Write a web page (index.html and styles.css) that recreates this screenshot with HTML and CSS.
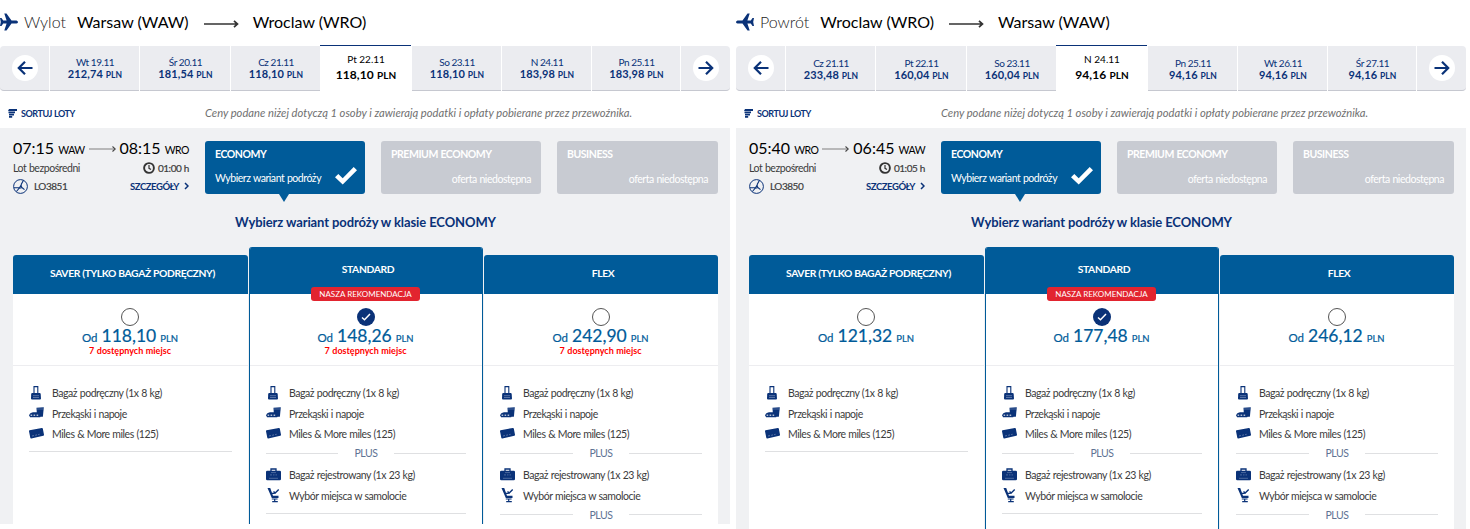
FILE: index.html
```
<!DOCTYPE html>
<html lang="pl">
<head>
    <meta charset="UTF-8">
    <meta name="viewport" content="width=device-width, initial-scale=1.0">
    <title>Wybierz lot</title>
    <link rel="stylesheet" href="styles.css">
</head>
<body>
    <!-- ikony -->
    <svg class="sprite">
        <symbol id="plane" viewBox="0 0 18 18">
            <path d="M18 9c0-1-1.200-1.600-2.500-1.600h-4L6.500.5H4.300l2.300 6.900H3.200L1.500 5H0l.8 4L0 13h1.500l1.700-2.400h3.400l-2.300 6.900h2.200l5-6.900h4C16.800 10.600 18 10 18 9z"/>
        </symbol>
        <symbol id="left" viewBox="0 0 16 14">
            <path d="M15.500 7H2M8 .8L1.800 7 8 13.200" fill="none" stroke="currentColor" stroke-width="2.200"/>
        </symbol>
        <symbol id="right" viewBox="0 0 16 14">
            <path d="M.5 7H14M8 .8L14.200 7 8 13.200" fill="none" stroke="currentColor" stroke-width="2.200"/>
        </symbol>
        <symbol id="long" viewBox="0 0 35 8">
            <path d="M0 4h33M30 .8L33.500 4 30 7.200" fill="none" stroke="currentColor" stroke-width="1.700"/>
        </symbol>
        <symbol id="mid" viewBox="0 0 27 6">
            <path d="M0 3h26" fill="none" stroke="#999" stroke-width="1.300"/>
            <path d="M23.500 .5L26.300 3l-2.800 2.500" fill="none" stroke="#444" stroke-width="1.100"/>
        </symbol>
        <symbol id="sort" viewBox="0 0 9 9">
            <path d="M1 0h8v2H0zM.5 2.400h6.500v1.900H.5zM1 4.700h5v1.800H1zM1 6.900h3.200v1.900H1z"/>
        </symbol>
        <symbol id="clock" viewBox="0 0 12 12">
            <circle cx="6" cy="6" r="4.900" fill="none" stroke="#333" stroke-width="1.900"/>
            <path d="M6 3v3.300l2 1.200" fill="none" stroke="#333" stroke-width="1.200"/>
        </symbol>
        <symbol id="lot" viewBox="0 0 15 15">
            <circle cx="7.500" cy="7.500" r="6.900" fill="none" stroke="currentColor"/>
            <path d="M10.500 1.200L8.300 5.300q-.6 2 .6 3.200l2.600 2.200M8.600 8.700L6.200 9.200l-2.800 3.300M8.300 5.700L6.500 8.700H1" fill="none" stroke="currentColor" stroke-width="1.100"/>
        </symbol>
        <symbol id="check" viewBox="0 0 22 18">
            <path d="M0 10.200L3.300 7l4.400 4.200L18.700 0 22 3.200 7.700 17.600z"/>
        </symbol>
        <symbol id="tick" viewBox="0 0 10 8">
            <path d="M1 4.500l2.500 2.300L9 1" fill="none" stroke="currentColor" stroke-width="1.500"/>
        </symbol>
        <symbol id="hand" viewBox="0 0 15 15">
            <path d="M5 8V.6h3.800V8" fill="none" stroke="currentColor" stroke-width="1.100"/>
            <path d="M3.200 7h7.400q1 0 1.100 1l.3 4.500q0 1-1 1h-8q-1 0-1-1L2.200 8q.1-1 1-1z"/>
            <path d="M4 9.700h6M4 11.500h6" stroke="#8da0c4" stroke-width=".6"/>
        </symbol>
        <symbol id="snack" viewBox="0 0 15 15">
            <path d="M7.500 1.800l7.300-.6-.9 9.600H8z"/>
            <path d="M7.500 3h7" stroke="#8da0c4" stroke-width=".5"/>
            <path d="M.2 9.200Q.6 6.700 4 6.200h4q3 .4 3.800 3l-.6 2H1z"/>
            <path d="M1.600 9.200h1.600m1.400 0h1.600m1.400 0h1.600" stroke="#fff" stroke-width="1"/>
        </symbol>
        <symbol id="card" viewBox="0 0 15 15">
            <path d="M0 4.200q-.2-.8.6-1L12.800 .9q.8-.1 1 .6L15 7.700q.1.800-.7 1L2.300 11.500q-.8.200-1-.7z"/>
            <path d="M3 9l2-.4m1.200-.3l1.800-.4m1.200-.3l1.400-.3" stroke="#8da0c4" stroke-width=".6"/>
        </symbol>
        <symbol id="case" viewBox="0 0 15 15">
            <path d="M5 3.500V1h5v2.500" fill="none" stroke="currentColor" stroke-width="1.300"/>
            <path d="M1.300 2.700h12.400q1.300 0 1.300 1.300v7q0 1.300-1.300 1.300H1.300Q0 12.300 0 11V4q0-1.300 1.300-1.300z"/>
            <path d="M3 10.300h9M4 6.900h2m1 0h1.500m1 0H11M5 4.600h5" stroke="#8da0c4" stroke-width=".5"/>
        </symbol>
        <symbol id="seat" viewBox="0 0 15 15">
            <path d="M1.500 0l2.700-.1L7 7.700h5.500V10H5.800z"/>
            <path d="M5.800 5.300h3M5.800 11h5.800M8.700 10.500v3M6.200 13.600h5.600" fill="none" stroke="currentColor" stroke-width="1.200"/>
            <path d="M7.500 3.400L9.200 5l3.500-3.400" fill="none" stroke="currentColor" stroke-width="1.400"/>
        </symbol>
    </svg>

    <div class="page">
        <!-- Wylot -->
        <section class="flight out">
            <h1 class="route">
                <svg class="plane"><use href="#plane"/></svg>
                <span class="dir">Wylot</span>
                <span class="city">Warsaw (WAW)</span>
                <svg class="long"><use href="#long"/></svg>
                <span class="city">Wroclaw (WRO)</span>
            </h1>
            <div class="days">
                <button class="arrow prev"><i><svg><use href="#left"/></svg></i></button>
                <div class="day"><span>Wt 19.11</span><b>212,74 <small>PLN</small></b></div>
                <div class="day"><span>Śr 20.11</span><b>181,54 <small>PLN</small></b></div>
                <div class="day"><span>Cz 21.11</span><b>118,10 <small>PLN</small></b></div>
                <div class="day active"><span>Pt 22.11</span><b>118,10 <small>PLN</small></b></div>
                <div class="day"><span>So 23.11</span><b>118,10 <small>PLN</small></b></div>
                <div class="day"><span>N 24.11</span><b>183,98 <small>PLN</small></b></div>
                <div class="day"><span>Pn 25.11</span><b>183,98 <small>PLN</small></b></div>
                <button class="arrow next"><i><svg><use href="#right"/></svg></i></button>
            </div>
            <div class="sortbar">
                <svg class="sort"><use href="#sort"/></svg>
                <span class="sort-text">SORTUJ LOTY</span>
                <em>Ceny podane niżej dotyczą 1 osoby i zawierają podatki i opłaty pobierane przez przewoźnika.</em>
            </div>
            <div class="result">
                <div class="top">
                    <div class="info">
                        <div class="hours"><span>07:15 <small>WAW</small></span><svg><use href="#mid"/></svg><span>08:15 <small>WRO</small></span></div>
                        <div class="line"><span>Lot bezpośredni</span><span class="time"><svg><use href="#clock"/></svg>01:00 h</span></div>
                        <div class="line"><span class="num"><svg><use href="#lot"/></svg>LO3851</span><a class="more">SZCZEGÓŁY <svg viewBox="0 0 5 8"><path d="M1 1l3 3-3 3"/></svg></a></div>
                    </div>
                    <div class="cabin selected"><b>ECONOMY</b><span>Wybierz wariant podróży</span><svg><use href="#check"/></svg></div>
                    <div class="cabin"><b>PREMIUM ECONOMY</b><span>oferta niedostępna</span></div>
                    <div class="cabin"><b>BUSINESS</b><span>oferta niedostępna</span></div>
                </div>
                <h2>Wybierz wariant podróży w klasie ECONOMY</h2>
                <div class="fares">
                    <div class="fare">
                        <h3>SAVER (TYLKO BAGAŻ PODRĘCZNY)</h3>
                        <div class="price"><i class="radio"></i><p>Od <b>118,10</b> <small>PLN</small></p><em>7 dostępnych miejsc</em></div>
                        <ul>
                            <li><svg><use href="#hand"/></svg>Bagaż podręczny (1x 8 kg)</li>
                            <li><svg><use href="#snack"/></svg>Przekąski i napoje</li>
                            <li><svg><use href="#card"/></svg>Miles &amp; More miles (125)</li>
                            <li class="rule"></li>
                        </ul>
                    </div>
                    <div class="fare best">
                        <h3>STANDARD</h3>
                        <span class="tag">NASZA REKOMENDACJA</span>
                        <div class="price"><i class="radio on"><svg><use href="#tick"/></svg></i><p>Od <b>148,26</b> <small>PLN</small></p><em>7 dostępnych miejsc</em></div>
                        <ul>
                            <li><svg><use href="#hand"/></svg>Bagaż podręczny (1x 8 kg)</li>
                            <li><svg><use href="#snack"/></svg>Przekąski i napoje</li>
                            <li><svg><use href="#card"/></svg>Miles &amp; More miles (125)</li>
                            <li class="plus">PLUS</li>
                            <li><svg><use href="#case"/></svg>Bagaż rejestrowany (1x 23 kg)</li>
                            <li><svg><use href="#seat"/></svg>Wybór miejsca w samolocie</li>
                            <li class="rule"></li>
                        </ul>
                    </div>
                    <div class="fare">
                        <h3>FLEX</h3>
                        <div class="price"><i class="radio"></i><p>Od <b>242,90</b> <small>PLN</small></p><em>7 dostępnych miejsc</em></div>
                        <ul>
                            <li><svg><use href="#hand"/></svg>Bagaż podręczny (1x 8 kg)</li>
                            <li><svg><use href="#snack"/></svg>Przekąski i napoje</li>
                            <li><svg><use href="#card"/></svg>Miles &amp; More miles (125)</li>
                            <li class="plus">PLUS</li>
                            <li><svg><use href="#case"/></svg>Bagaż rejestrowany (1x 23 kg)</li>
                            <li><svg><use href="#seat"/></svg>Wybór miejsca w samolocie</li>
                            <li class="plus">PLUS</li>
                        </ul>
                    </div>
                </div>
            </div>
        </section>

        <!-- Powrót -->
        <section class="flight back">
            <h1 class="route">
                <svg class="plane"><use href="#plane"/></svg>
                <span class="dir">Powrót</span>
                <span class="city">Wroclaw (WRO)</span>
                <svg class="long"><use href="#long"/></svg>
                <span class="city">Warsaw (WAW)</span>
            </h1>
            <div class="days">
                <button class="arrow prev"><i><svg><use href="#left"/></svg></i></button>
                <div class="day"><span>Cz 21.11</span><b>233,48 <small>PLN</small></b></div>
                <div class="day"><span>Pt 22.11</span><b>160,04 <small>PLN</small></b></div>
                <div class="day"><span>So 23.11</span><b>160,04 <small>PLN</small></b></div>
                <div class="day active"><span>N 24.11</span><b>94,16 <small>PLN</small></b></div>
                <div class="day"><span>Pn 25.11</span><b>94,16 <small>PLN</small></b></div>
                <div class="day"><span>Wt 26.11</span><b>94,16 <small>PLN</small></b></div>
                <div class="day"><span>Śr 27.11</span><b>94,16 <small>PLN</small></b></div>
                <button class="arrow next"><i><svg><use href="#right"/></svg></i></button>
            </div>
            <div class="sortbar">
                <svg class="sort"><use href="#sort"/></svg>
                <span class="sort-text">SORTUJ LOTY</span>
                <em>Ceny podane niżej dotyczą 1 osoby i zawierają podatki i opłaty pobierane przez przewoźnika.</em>
            </div>
            <div class="result">
                <div class="top">
                    <div class="info">
                        <div class="hours"><span>05:40 <small>WRO</small></span><svg><use href="#mid"/></svg><span>06:45 <small>WAW</small></span></div>
                        <div class="line"><span>Lot bezpośredni</span><span class="time"><svg><use href="#clock"/></svg>01:05 h</span></div>
                        <div class="line"><span class="num"><svg><use href="#lot"/></svg>LO3850</span><a class="more">SZCZEGÓŁY <svg viewBox="0 0 5 8"><path d="M1 1l3 3-3 3"/></svg></a></div>
                    </div>
                    <div class="cabin selected"><b>ECONOMY</b><span>Wybierz wariant podróży</span><svg><use href="#check"/></svg></div>
                    <div class="cabin"><b>PREMIUM ECONOMY</b><span>oferta niedostępna</span></div>
                    <div class="cabin"><b>BUSINESS</b><span>oferta niedostępna</span></div>
                </div>
                <h2>Wybierz wariant podróży w klasie ECONOMY</h2>
                <div class="fares">
                    <div class="fare">
                        <h3>SAVER (TYLKO BAGAŻ PODRĘCZNY)</h3>
                        <div class="price"><i class="radio"></i><p>Od <b>121,32</b> <small>PLN</small></p></div>
                        <ul>
                            <li><svg><use href="#hand"/></svg>Bagaż podręczny (1x 8 kg)</li>
                            <li><svg><use href="#snack"/></svg>Przekąski i napoje</li>
                            <li><svg><use href="#card"/></svg>Miles &amp; More miles (125)</li>
                            <li class="rule"></li>
                        </ul>
                    </div>
                    <div class="fare best">
                        <h3>STANDARD</h3>
                        <span class="tag">NASZA REKOMENDACJA</span>
                        <div class="price"><i class="radio on"><svg><use href="#tick"/></svg></i><p>Od <b>177,48</b> <small>PLN</small></p></div>
                        <ul>
                            <li><svg><use href="#hand"/></svg>Bagaż podręczny (1x 8 kg)</li>
                            <li><svg><use href="#snack"/></svg>Przekąski i napoje</li>
                            <li><svg><use href="#card"/></svg>Miles &amp; More miles (125)</li>
                            <li class="plus">PLUS</li>
                            <li><svg><use href="#case"/></svg>Bagaż rejestrowany (1x 23 kg)</li>
                            <li><svg><use href="#seat"/></svg>Wybór miejsca w samolocie</li>
                            <li class="rule"></li>
                        </ul>
                    </div>
                    <div class="fare">
                        <h3>FLEX</h3>
                        <div class="price"><i class="radio"></i><p>Od <b>246,12</b> <small>PLN</small></p></div>
                        <ul>
                            <li><svg><use href="#hand"/></svg>Bagaż podręczny (1x 8 kg)</li>
                            <li><svg><use href="#snack"/></svg>Przekąski i napoje</li>
                            <li><svg><use href="#card"/></svg>Miles &amp; More miles (125)</li>
                            <li class="plus">PLUS</li>
                            <li><svg><use href="#case"/></svg>Bagaż rejestrowany (1x 23 kg)</li>
                            <li><svg><use href="#seat"/></svg>Wybór miejsca w samolocie</li>
                            <li class="plus">PLUS</li>
                        </ul>
                    </div>
                </div>
            </div>
        </section>
    </div>
</body>
</html>
```
FILE: styles.css
```
*{
    margin: 0;
    padding: 0;
    box-sizing: border-box;
}
body{
    font-family: Lato, "Liberation Sans", sans-serif;
    font-size: 10.500px;
    letter-spacing: -.45px;
    word-spacing: .4px;
    color: #3c3c3c;
    background: #fff;
    overflow: hidden;
}
i{
    font-style: normal;
}
svg{
    display: block;
    fill: currentColor;
    flex: none;
}
.sprite{
    display: none;
}
.page{
    display: flex;
    gap: 6px;
    height: 529px;
    overflow: hidden;
}
.flight{
    width: 730px;
    height: 529px;
    overflow: hidden;
}
.out{
    height: 524px;
}

/* trasa */
.route{
    display: flex;
    align-items: center;
    height: 45px;
    padding-bottom: 2px;
    font-size: 16px;
    font-weight: 400;
    letter-spacing: 0;
    word-spacing: 0;
    color: #000;
    white-space: nowrap;
}
.plane{
    width: 18px;
    height: 18px;
    margin-top: 1px;
    color: #0a3278;
}
.back .plane{
    transform: scaleX(-1);
}
.dir{
    margin-left: 6px;
    margin-right: 11px;
    font-weight: 300;
    color: #222;
}
.long{
    width: 35px;
    height: 8px;
    margin: 4px 14px 0 15px;
    color: #333;
}

/* pasek dni */
.days{
    display: grid;
    grid-template-columns: 49px 89px 90px 89px 90px 89px 89px 88px 49px;
    column-gap: 1px;
    height: 46px;
}
.day,.arrow{
    margin-top: 1px;
    background: #ebecf0;
    border: none;
    border-bottom: 1px solid #c6c8d0;
    color: #0a3278;
}
.day{
    display: flex;
    flex-direction: column;
    align-items: center;
    padding: 10px 0 0 1px;
    font-size: 10px;
    line-height: 12px;
    word-spacing: 0;
}
.day b{
    font-size: 11px;
    letter-spacing: .1px;
}
.day small{
    font-size: 8.500px;
}
.back .day:not(.active){
    padding-top: 11px;
}
.day.active{
    margin: 0 0 0 -1px;
    padding-top: 6px;
    background: #fff;
    border-top: 1px solid #0a3278;
    border-bottom: none;
    color: #000;
    line-height: 15px;
    letter-spacing: 0;
}
.day.active b{
    font-size: 12px;
}
.day.active small{
    font-size: 10px;
}
.arrow{
    display: flex;
    align-items: center;
    justify-content: center;
    padding-left: 1px;
}
.prev{
    border-radius: 4px 0 0 4px;
}
.next{
    border-radius: 0 4px 4px 0;
}
.arrow i{
    display: flex;
    align-items: center;
    justify-content: center;
    width: 26px;
    height: 26px;
    border-radius: 50%;
    background: #fff;
}
.arrow svg{
    width: 16px;
    height: 14px;
}

/* sortowanie */
.sortbar{
    display: flex;
    align-items: center;
    height: 37px;
    padding: 7px 0 0 8px;
    color: #0a3278;
}
.sort{
    width: 9px;
    height: 9px;
    margin-right: 4px;
}
.sort-text{
    width: 184px;
    font-size: 9px;
    font-weight: 700;
}
.sortbar em{
    padding-bottom: 1px;
    font-size: 11.200px;
    letter-spacing: 0;
    word-spacing: 0;
    color: #707070;
    white-space: nowrap;
}

/* lot */
.result{
    height: 401px;
    padding: 13px 12px 0 13px;
    background: #f0f1f3;
}
.top{
    display: grid;
    grid-template-columns: 176px 160px 160px 161px;
    column-gap: 16px;
    height: 53px;
}
.hours{
    display: flex;
    justify-content: space-between;
    align-items: center;
    height: 16px;
    margin-bottom: 2px;
    font-size: 16px;
    letter-spacing: 0;
    word-spacing: 0;
    line-height: 16px;
    color: #000;
}
.hours small{
    font-size: 10.500px;
    letter-spacing: -.5px;
}
.hours svg{
    width: 27px;
    height: 6px;
}
.line{
    display: flex;
    justify-content: space-between;
    align-items: center;
    height: 18px;
}
.line span,.line a{
    display: flex;
    align-items: center;
}
.time svg{
    width: 12px;
    height: 12px;
    margin-right: 3px;
}
.num svg{
    width: 15px;
    height: 15px;
    margin-right: 6px;
    color: #0a3278;
}
.line .time,.line .num{
    font-size: 10px;
    letter-spacing: -.45px;
    -webkit-text-stroke: .2px #3c3c3c;
}
.more{
    font-size: 9.500px;
    font-weight: 700;
    color: #0a3278;
}
.more svg{
    width: 5px;
    height: 8px;
    margin-left: 5px;
    fill: none;
    stroke: #0a3278;
    stroke-width: 1.500;
}
.cabin{
    position: relative;
    display: flex;
    flex-direction: column;
    height: 53px;
    padding: 7px 10px;
    border-radius: 3px;
    background: #c8cbd2;
    color: #fff;
    line-height: 12px;
}
.cabin span{
    margin-top: 13px;
    text-align: right;
}
.cabin.selected{
    background: #005b99;
}
.selected span{
    margin-top: 12px;
    text-align: left;
}
.selected svg{
    position: absolute;
    right: 8px;
    bottom: 9px;
    width: 22px;
    height: 18px;
}
.selected::after{
    content: "";
    position: absolute;
    left: 74px;
    top: 53px;
    border: 5px solid transparent;
    border-top: 8px solid #005b99;
    border-bottom: none;
}
h2{
    height: 53px;
    padding-top: 20px;
    font-size: 13px;
    line-height: 17px;
    letter-spacing: -.1px;
    word-spacing: 0;
    text-align: center;
    color: #0a3278;
}

/* taryfy */
.fares{
    display: grid;
    grid-template-columns: 235px 234px 234px;
    column-gap: 1px;
    height: 282px;
}
.fare{
    display: flex;
    flex-direction: column;
    margin-top: 8px;
    border-radius: 3px 3px 0 0;
    background: #fff;
    overflow: hidden;
}
.fare h3{
    height: 39px;
    padding-left: 4px;
    background: #005b99;
    color: #fff;
    font-size: 10.300px;
    line-height: 37px;
    letter-spacing: -.35px;
    word-spacing: 0;
    text-align: center;
}
.best{
    position: relative;
    margin-top: 0;
    border: 1px solid #005b99;
    border-width: 0 1px;
}
.best h3{
    height: 47px;
    line-height: 45px;
}
.tag{
    position: absolute;
    top: 40px;
    left: 61px;
    width: 109px;
    border-radius: 3px;
    background: #e2242f;
    color: #fff;
    font-size: 8px;
    line-height: 14px;
    letter-spacing: 0;
    word-spacing: 0;
    text-align: center;
}
.price{
    height: 72px;
    padding: 14px 1px 0 0;
    border-bottom: 1px solid #ededf0;
    text-align: center;
    color: #005b99;
}
.radio{
    display: flex;
    align-items: center;
    justify-content: center;
    width: 18px;
    height: 18px;
    margin: 0 auto 2px;
    border: 1px solid #555;
    border-radius: 50%;
}
.radio.on{
    border: none;
    background: #0a3278;
    color: #fff;
}
.radio svg{
    width: 10px;
    height: 8px;
}
.price p{
    height: 18px;
    font-size: 11.500px;
    line-height: 20px;
    letter-spacing: 0;
    word-spacing: 0;
    -webkit-text-stroke: .2px #005b99;
}
.price p b{
    margin: 0 1px;
    font-size: 17.500px;
    font-weight: 400;
    line-height: 16px;
}
.price p small{
    font-size: 9.500px;
}
.price em{
    display: block;
    font-size: 9px;
    font-style: normal;
    font-weight: 700;
    line-height: 9px;
    letter-spacing: 0;
    color: #f00;
}
ul{
    padding: 17px 16px 0;
    list-style: none;
}
li{
    display: flex;
    align-items: center;
    height: 20.500px;
}
li svg{
    width: 15px;
    height: 15px;
    margin-right: 8px;
    color: #0a3278;
}
.plus{
    gap: 16px;
    justify-content: center;
    padding-bottom: 3px;
    color: #5f7394;
}
.plus::before,.plus::after{
    content: "";
    flex: 1;
    height: 1px;
    background: #dfe0e2;
}
.rule{
    padding-bottom: 6px;
}
.rule::before{
    content: "";
    flex: 1;
    height: 1px;
    background: #dfe0e2;
}
```
